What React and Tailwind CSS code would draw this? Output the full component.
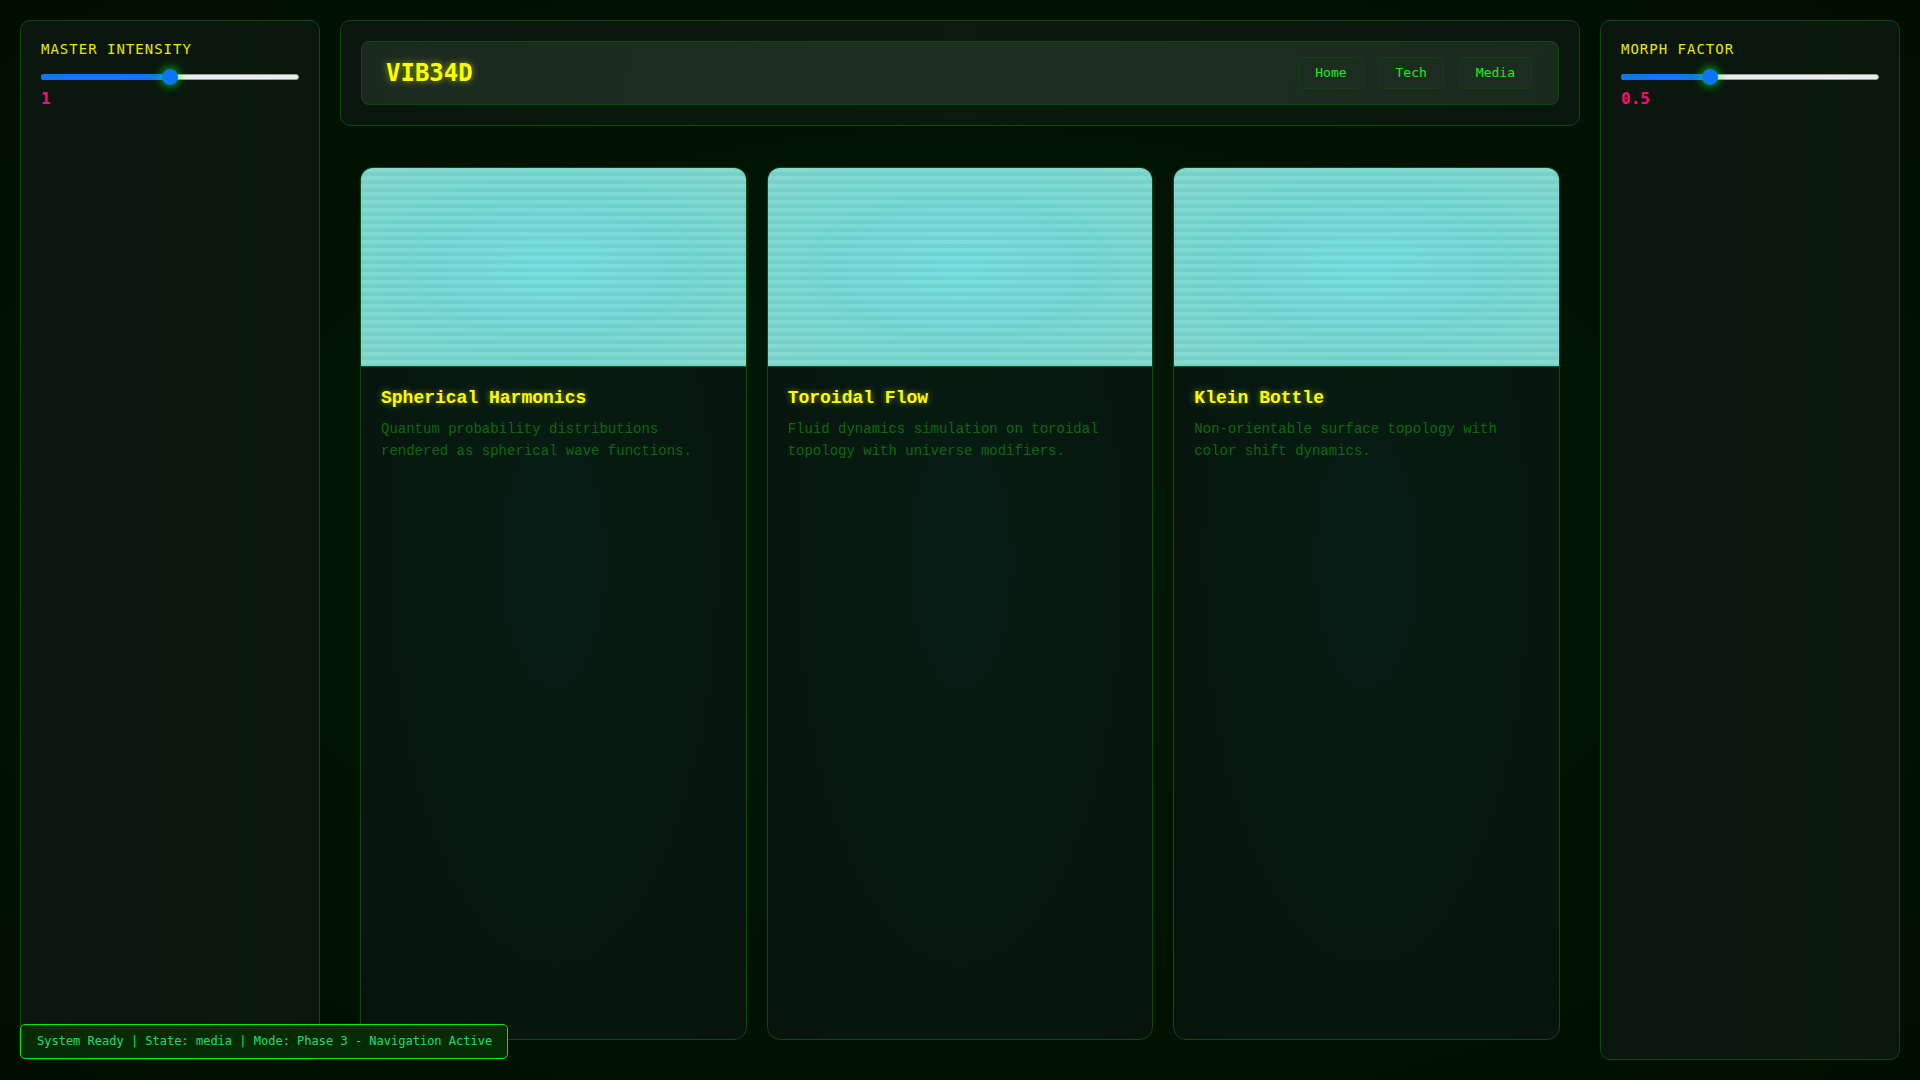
const sans = "font-['DejaVu_Sans_Mono',monospace]";
const mono = "font-['Liberation_Mono','Courier_New',monospace]";

const cards = [
  {
    title: "Spherical Harmonics",
    text: "Quantum probability distributions rendered as spherical wave functions.",
  },
  {
    title: "Toroidal Flow",
    text: "Fluid dynamics simulation on toroidal topology with universe modifiers.",
  },
  {
    title: "Klein Bottle",
    text: "Non-orientable surface topology with color shift dynamics.",
  },
];

function Slider({ label, value, pct }) {
  return (
    <div className="flex flex-col">
      <div className={`${sans} text-[14px] leading-[17px] tracking-[1px] text-[#e8e800] uppercase`}>
        {label}
      </div>
      <div className="relative mt-[11px] h-4">
        <div className="absolute inset-x-0 top-[5px] h-[6px] rounded-full border border-[#9a9a9a] bg-[#ececec]" />
        <div className="absolute inset-x-2 inset-y-0">
          <div
            className="absolute left-[-8px] top-[5px] h-[6px] rounded-l-full bg-[#0a78f2]"
            style={{ width: `calc(${pct}% + 8px)` }}
          />
          <div
            className="absolute top-0 h-4 w-4 -translate-x-1/2 rounded-full bg-[#0a74f5] shadow-[0_0_8px_2px_rgba(0,255,0,0.55)]"
            style={{ left: `${pct}%` }}
          />
        </div>
      </div>
      <div className={`${sans} mt-[2px] text-[16px] leading-[24px] font-bold text-[#ff0a7a]`}>{value}</div>
    </div>
  );
}

function Panel({ children }) {
  return (
    <aside className="rounded-[10px] border border-[#0b4a0b] bg-[linear-gradient(90deg,#09160d_0%,#0a170d_60%,#0b1a0d_80%,#0a160c_100%)] p-5">
      {children}
    </aside>
  );
}

export default function App() {
  return (
    <div className="relative h-screen w-full overflow-hidden bg-[radial-gradient(ellipse_at_center,#021a05_0%,#011202_60%,#000e00_100%)]">
      <div className="grid h-full grid-cols-[300px_1fr_300px] gap-5 p-5">
        <Panel>
          <Slider label="Master Intensity" value="1" pct={50} />
        </Panel>

        <main className="flex min-h-0 flex-col">
          <header className="rounded-[10px] border border-[#0b4a0b] bg-[linear-gradient(90deg,#0a160d,#0b190e_50%,#09160d)] p-5">
            <div className="flex h-16 items-center justify-between rounded-lg border border-[#0d4a10] bg-[linear-gradient(100deg,#1b2a1f,#1f2e23_50%,#1b2a1f)] pl-6 pr-[26px]">
              <div className={`${sans} text-[24px] font-bold leading-none text-[#ffff00] [text-shadow:0_0_7px_rgba(230,255,0,0.6)]`}>
                VIB34D
              </div>
              <nav className="flex gap-[15px]">
                {["Home", "Tech", "Media"].map((n) => (
                  <button
                    key={n}
                    className={`${sans} h-8 rounded-md border border-[#0e4212] bg-[#1c2d20] px-4 text-[13px] text-[#16f016]`}
                  >
                    {n}
                  </button>
                ))}
              </nav>
            </div>
          </header>

          <section className="grid min-h-0 flex-1 grid-cols-3 gap-5 px-5 pt-[41px] pb-5">
            {cards.map((c) => (
              <div
                key={c.title}
                className="flex flex-col overflow-hidden rounded-[13px] border border-[#0b4a10] bg-[radial-gradient(ellipse_at_50%_45%,#071d15_0%,#06170f_55%,#06140c_100%)]"
              >
                <div className="h-[199px] border-b border-[#0a5a12] bg-[repeating-linear-gradient(180deg,rgba(255,255,255,0.07)_0px,rgba(255,255,255,0.07)_4px,rgba(0,80,80,0.04)_4px,rgba(0,80,80,0.04)_8px),radial-gradient(ellipse_at_center,#72dcdc_0%,#70d6d2_50%,#7ed6cc_100%)]" />
                <div className="p-5">
                  <h2 className={`${mono} text-[18px] font-bold leading-[22px] text-[#ffff00] [text-shadow:0_0_6px_rgba(230,255,0,0.55)]`}>
                    {c.title}
                  </h2>
                  <p className={`${mono} mt-[9px] text-[14px] leading-[22px] text-[#0c6a0e]`}>{c.text}</p>
                </div>
              </div>
            ))}
          </section>
        </main>

        <Panel>
          <Slider label="Morph Factor" value="0.5" pct={33.33} />
        </Panel>
      </div>

      <div className={`${sans} absolute bottom-[21px] left-5 rounded-[5px] border border-[#00ee00] bg-[#042a06] pl-4 pr-[15px] py-[9px] text-[12px] leading-[15px] text-[#10e070]`}>
        System Ready | State: media | Mode: Phase 3 - Navigation Active
      </div>
    </div>
  );
}
